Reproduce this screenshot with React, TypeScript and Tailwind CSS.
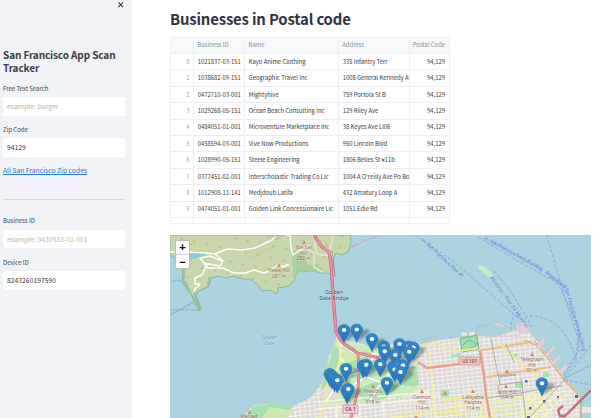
import React from 'react';

const rows = [
  ['1021837-03-151', 'Kayo Anime Clothing', '335 Infantry Terr'],
  ['1038682-09-151', 'Geographic Travel Inc', '1008 General Kennedy Av'],
  ['0472710-03-001', 'Mightyhive', '759 Portola St B'],
  ['1029268-05-151', 'Ocean Beach Consulting Inc', '129 Riley Ave'],
  ['0484051-01-001', 'Microventure Marketplace Inc', '38 Keyes Ave Ll06'],
  ['0458594-03-001', 'Vive Now Productions', '950 Lincoln Blvd'],
  ['1028990-05-151', 'Steele Engineering', '1806 Belles St #11b'],
  ['0377451-02-001', 'Interscholastic Trading Co Llc', "1004 A O'reilly Ave Po Box"],
  ['1012908-11-141', 'Medjdoub Latifa', '432 Amatury Loop A'],
  ['0474051-01-001', 'Golden Link Concessionaire Llc', '1051 Edie Rd'],
];

const pins: [number, number][] = [
  [344, 330], [356.7, 329.5], [372, 339], [399.5, 344], [408.5, 346.5], [413.3, 347.5],
  [384, 346.5], [384.7, 351.3], [409.3, 351.7], [395.3, 355], [363.3, 365.5], [366.3, 364.7],
  [380.3, 364.2], [393.7, 366], [398, 365], [403, 365.3], [346, 368.7], [394.7, 369.5],
  [400.5, 372], [330, 374], [332, 376], [334.5, 379], [337.3, 380.2], [387, 382.7],
  [347, 391], [348.3, 389], [542, 383.3],
];

const NORTH = 'M170 235H350L351 243 348 252 342 255 336 253 333 259 335 275 326 273 320 273 315 271 307 271 297 272 294 281 289 286 278 288 277 294 270 290 262 291 258 285 250 279 242 279 234 276 225 278 219 276 211 278 209 286 202 290 198 291 196 296 198 303 200 311 196 306 191 294 185 287 182 281 183 271 179 260 170 255Z';
const SOUTH = 'M242 418L248 411 254 405 265 404 277 403 285 406 293 406 300 403 308 399 315 393 322 382 326 370 329 356 334 346 337 335 343 341 358 342 372 348 383 347 394 343 410 342 419 344 440 340 460 338 462 332 476 332 477 336 493 337 508 333 518 330 517 325 525 323 528 330 535 339 545 350 553 361 563 376 574 388 581 396 582 418Z';

function Label({ x, y, children, fill = '#926355', size = 4.9, rotate = 0 }: { x: number; y: number; children: string; fill?: string; size?: number; rotate?: number }) {
  return (
    <text x={x} y={y} fontSize={size} fill={fill} textAnchor="middle" stroke="#ffffff" strokeOpacity=".35" strokeWidth=".8" paintOrder="stroke" transform={`rotate(${rotate} ${x} ${y})`}>
      {children}
    </text>
  );
}

function Pin({ x, y }: { x: number; y: number }) {
  return (
    <g transform={`translate(${x - 6.25} ${y - 5.8}) scale(.5 .46)`}>
      <path d="M12.5 .5C5.7.5.5 5.8.5 12.5c0 3 .8 5 2 7.2C5.5 26 10 33 12.5 40.5 15 33 19.5 26 22.5 19.7c1.2-2.2 2-4.2 2-7.2C24.5 5.8 19.3.5 12.5.5Z" fill="url(#pin)" stroke="#286da8" />
      <circle cx="12.5" cy="12.7" r="4.5" fill="#fff" />
    </g>
  );
}

function CityMap() {
  return (
    <svg className="block h-[183px] w-[421px] font-['Noto_Sans']" viewBox="170 235 421 183">
      <defs>
        <linearGradient id="pin" x1="0" x2="0" y1="0" y2="1"><stop stopColor="#3289ce" /><stop offset="1" stopColor="#2771b5" /></linearGradient>
        <filter id="soft"><feGaussianBlur stdDeviation="1.3" /></filter>
        <clipPath id="southClip"><path d={SOUTH} /></clipPath>
        <clipPath id="northClip"><path d={NORTH} /></clipPath>
        <pattern id="streets" width="5" height="4" patternUnits="userSpaceOnUse" patternTransform="rotate(-6)">
          <path d="M0 0H5M0 0V4" stroke="#faf9f7" strokeWidth="1.3" />
        </pattern>
        <pattern id="yellowStreets" width="7" height="5" patternUnits="userSpaceOnUse" patternTransform="rotate(-6)">
          <path d="M0 0H7M0 0V5" stroke="#f3f3a6" strokeWidth="2" />
        </pattern>
        <pattern id="diagonalStreets" width="6" height="6" patternUnits="userSpaceOnUse" patternTransform="rotate(-42)">
          <path d="M0 0H6M0 0V6" stroke="#f6f3bd" strokeWidth="2" />
        </pattern>
        <pattern id="trees" width="13" height="12" patternUnits="userSpaceOnUse" patternTransform="rotate(12)">
          <path d="M5 5l1.5-3L8 5Z" fill="#adc191" />
        </pattern>
      </defs>
      <path d="M170 235h421v183H170z" fill="#aad3df" />

      <path d={NORTH} fill="#c8d7ab" stroke="#85b99d" strokeWidth="1" />
      <g clipPath="url(#northClip)" fill="none">
        <path d="M170 235H350V311H170z" fill="url(#trees)" />
        <path d="M292 250l12 4 4 12 10-3 4 9-29 1Z" fill="#a9d09b" />
        <path d="M181 257l10-4 14-1-1 4-13 4-9 1Z" fill="#8fcad8" />
        <path d="M313 235l4 19 12 2 4-21M307 250l7 3v14l8 5" stroke="#e0e7ce" strokeWidth="1.5" />
        <path d="M200 235l6 5 14-2 8 6 14-8 10 12-6 7 12 4 4-7M249 235l2 11 8 7 20-8M182 242l8 3 9-5 9 5" stroke="#cfbd8b" strokeWidth=".7" strokeDasharray="1.5 1" />
        <path d="M170 252h13l23 1 9 1 12-5 15 1 13-2 17-8 6-8 12 4 1 12 2 7 9-6 8-3M215 254l8 7-3 5-16-3-4-5 10-2 12 5M204 263l4 5 15 0 11 5 11 0 9-3 10 3 5-2 9-6 5 2 6-3M206 266l-4 9-7 3 0 6 5 0-5 5-1 3" stroke="#fffefa" strokeWidth="1.4" strokeLinejoin="round" />
        <path d="M266 238l14-3M275 240l9-5" stroke="#aaa9ae" strokeWidth=".7" />
        <path d="M210 277l-2 10-9 5-5 5 6 14M178 260l6 10-1 12 10 16" stroke="#8aaf94" strokeWidth="3" strokeOpacity=".55" />
      </g>
      <path d="M170 310h29" stroke="#a7a1c9" strokeWidth="1" strokeDasharray="4 1" />
      <path d="M170 315l11-6 13-7" fill="none" stroke="#70b5a8" strokeWidth="1" />
      <path d="M202 310l-8-18M172 282c5-5 8 1 14 0l4 10" stroke="#80bcb8" strokeWidth="1.2" fill="none" />

      <path d={SOUTH} fill="#dddad7" stroke="#cfcdbb" />
      <g clipPath="url(#southClip)" fill="none">
        <path d="M242 320H590V418H242z" fill="url(#streets)" />
        <path d="M244 418l10-12 25-3 14 4-7 7-18 4Z" fill="#a2e2b2" />
        <path d="M262 418l8-11 18 3 8-1-10 9Z" fill="#d2e7b2" />
        <path d="M337 336L348 341 372 348 384 347 407 346 415 354 418 363 417 373 419 387 408 393 385 399 370 402 321 404 325 383Z" fill="#cdebb8" />
        <path d="M334 346l8 5-9 29-12 22 0-16 7-21ZM348 363l16-7 17 7 2 10-20 8-16-6ZM355 390l22-9 21 5-12 12-20 5ZM400 372l17-2 2 15-16 4Z" fill="#abdfb0" />
        <path d="M379 357l17-3 18 9-17 8-17-5ZM321 390l11-8 11 7-7 9-14 2Z" fill="#dedfd8" />
        <path d="M398 386h14l3 7-19 6Z" fill="#c6edbb" />
        <path d="M326 402l14-23 20-7 17-18 17-9M333 380l17 7 16-10 16 6 9-12 25-6M350 351l13 5 19-3M370 401l9-15 19-8M341 342l-1 16 14 14" stroke="#fffdf8" strokeWidth="1.7" />
        <path d="M337 341l5 9-4 17-11 18-2 18-7 15" stroke="#f1e9a2" strokeWidth="2" />
        <path d="M318 402l111-10M318 409l111-10M337 418v-14M360 418l-2-14M384 418l-1-17" stroke="#faf7da" strokeWidth="1.6" />
        <path d="M429 347l6 71M389 414l74-9M389 418l70-8M425 395l15 1" stroke="#f4f0a8" strokeWidth="1.6" />
        <path d="M460 339l17-4 2 14-17 3Z" fill="#a3dcae" stroke="#6cb68b" />
        <path d="M463 345l6-5 9 4-13 7M460 331l8 0v6h-8Z" stroke="#72b791" />
        <path d="M451 355l10-2v3l-10 2ZM515 383l8-1v6h-8ZM543 372h6v5h-6ZM512 354h5v3h-5ZM441 390h8v7h-8Z" fill="#a7e1b0" />
        <path d="M487 397l42-4 21-8v33H455l2-18Z" fill="url(#yellowStreets)" />
        <path d="M530 391l16-12 25 16-22 23h-31Z" fill="url(#diagonalStreets)" />
        <path d="M486 377l65-10M482 350l49-8" stroke="#f1bb81" strokeWidth="1.9" />
        <path d="M418 349l14-6 28 8 18-3M500 344l24 22 12 8 6 26M442 400l49-4M440 414l20-3" stroke="#efec91" strokeWidth="1.8" />
        <path d="M418 362l9 6 24-3 29-4M480 350l4 26 2 19 4 23" stroke="#e8a08d" strokeWidth="2.6" />
        <path d="M524 340l12 5 12 13 17 23 16 16v21" stroke="#e6b579" strokeWidth="1.8" />
        <path d="M491 339l9 46M506 344l8 18M498 385l2 12 22-2M500 391h21M499 385l22-3M488 398l74-12M521 378l5 40M567 377l-38 41" stroke="#93979b" strokeWidth=".7" />
        <path d="M534 341l16 16 17 23 12 13" stroke="#b4865d" strokeWidth=".8" />
      </g>
      <path d="M519 325l9-1 1 8-10 1ZM536 347l7-10 3 2-6 12ZM545 355l9-10 2 3-9 10ZM550 363l9-8 2 3-9 8ZM558 371l8-7 2 3-7 7ZM494 324l4-2 15 10 4-1M500 337l20-1" fill="#e1cfd5" stroke="#d2bdca" strokeWidth=".6" />
      <path d="M475 335c1-8 7-10 12-8M485 326l9-4M479 336c-5-2-5-10 3-12M417 341l20-5M420 343l12-3" fill="none" stroke="#b8bec1" strokeWidth="1" />
      <path d="M563 379l28-14M581 396v22" stroke="#98a5ac" strokeWidth=".8" />
      <path d="M591 390L565 416h-5l-2-6 5-4" fill="none" stroke="#c66980" strokeWidth="2.3" />
      <path d="M582 407h9v6h-9Z" fill="#f0e4df" />

      <path d="M314 235l8 12 7 5 2 12 2 30 3 38 6 10 15 11 23 5" fill="none" stroke="#bd657d" strokeWidth="3.2" strokeLinejoin="round" />
      <path d="M314 235l8 12 7 5 2 12 2 30 3 38 6 10 15 11 23 5" fill="none" stroke="#ed8ba0" strokeWidth="2.1" strokeLinejoin="round" />
      <path d="M358 354l1 17-1 20-7 27" fill="none" stroke="#d96d83" strokeWidth="2.6" />
      <path d="M358 354l1 17-1 20-7 27" fill="none" stroke="#e892a0" strokeWidth="1.8" />
      <path d="M332 251l3 26" stroke="#75899a" strokeWidth=".6" />

      <g fill="none" stroke="#8297e2" strokeWidth=".8" strokeDasharray="3 2">
        <path d="M415 235l38 26 56 49 9 8M478 237l45 27 30 16 9 10 16 48-2 22-13 17M494 271l15 18 15 24 8 14M547 235l9 32 9 31 14 30 0 22-16 26M511 330l1-11 8-5M530 316c26 0 42 21 46 46M591 345l-14 19-15 16M565 380l26 5" />
      </g>
      <path d="M478 265l6 1 8 7v4l-5-1-8-7Z" fill="#c5eccb" />
      <g fill="#6378df" fontSize="5">
        <text transform="translate(421 240) rotate(43)" textLength="56">o - San Francisco Pier 41</text>
        <text transform="translate(484 239) rotate(29)" textLength="66">is - San Francisco Ferry Building</text>
        <text transform="translate(545 273) rotate(39)" textLength="25">Angel Island</text>
        <text transform="translate(564 286) rotate(74)" textLength="68">- San Francisco Ferry Building</text>
        <text transform="translate(490 278) rotate(54)" textLength="62">Alcatraz - Pier 33 Alcatraz</text>
      </g>
      <path d="M350 247l30-13" stroke="#a69ec5" strokeWidth=".8" strokeDasharray="4 1" />
      <Label x={365} y={243} fill="#9296bd" size={4.8} rotate={-23}>Marin County</Label>
      <Label x={269.5} y={339} fill="#6c8fc5" size={4.5}>Golden</Label>
      <Label x={269.5} y={344.5} fill="#6c8fc5" size={4.5}>Gate</Label>
      <Label x={334} y={294} fill="#424d57" size={5.3}>Golden</Label>
      <Label x={334} y={300.3} fill="#424d57" size={5.3}>Gate Bridge</Label>
      <Label x={304} y={249}>Slacker</Label><Label x={304} y={254.5}>Hill</Label><Label x={304} y={260}>282 m</Label>
      <Label x={279} y={272}>Hawk Hill</Label><Label x={279} y={277.5}>281 m</Label>
      <Label x={373} y={392.5}>Presidio</Label><Label x={373} y={398}>Hill</Label><Label x={373} y={403.5}>118 m</Label>
      <Label x={422} y={398.5}>Cannon</Label><Label x={422} y={404}>Hill</Label><Label x={422} y={409.5}>114 m</Label>
      <Label x={532} y={361}>Telegraph</Label><Label x={532} y={366.5}>Hill</Label><Label x={532} y={372}>90 m</Label>
      <Label x={473} y={398.5}>Lafayette</Label><Label x={473} y={404}>Heights</Label><Label x={473} y={409.5}>114 m</Label>
      <Label x={507} y={393.5}>Nob Hill</Label><Label x={507} y={399}>104 m</Label><Label x={249} y={418}>Merced</Label>
      <Label x={508} y={376.5} fill="#54545b" size={3.6} rotate={-6}>Broadway</Label>
      <Label x={317} y={242} fill="#bb5776" size={4.5} rotate={25}>442</Label>
      <Label x={327} y={252} fill="#bb5776" size={4.5} rotate={15}>441</Label>
      <Label x={351} y={350} fill="#b74e6a" size={4.5} rotate={20}>438</Label>
      <Label x={366} y={355} fill="#b74e6a" size={4.5} rotate={12}>437</Label>
      <g fill="#d68a4d">
        {[[279, 265], [304, 242], [249.5, 412], [373, 386], [422, 391], [532, 354], [473, 391], [507, 371], [506, 386], [445, 393], [416, 417]].map(([x, y]) => <path key={`${x}-${y}`} d={`M${x - 2} ${y + 2}L${x} ${y - 2}L${x + 2} ${y + 2}Z`} />)}
      </g>
      <g fill="#5862a4"><path d="M525 380h2.5v2.5H525zM543 400h2.5v2.5H543zM529 407h2.5v2.5H529zM557 396h2v2h-2zM575 395h3v3h-3zM527 416h3v2h-3z" /></g>
      <g stroke="#c18899" strokeWidth=".7"><rect x="343" y="405" width="15" height="8.5" rx="1.3" fill="#f0cbd5" /><rect x="459" y="357" width="21" height="8" rx="1.3" fill="#f1c4b9" /></g>
      <text x="350.5" y="411.3" textAnchor="middle" fontSize="4.9" fontWeight="600" fill="#714457">CA 1</text>
      <text x="469.5" y="363" textAnchor="middle" fontSize="4.6" fontWeight="600" fill="#805052">US 101</text>

      <g filter="url(#soft)" fill="#24333e" opacity=".38">
        {pins.map(([x, y], i) => <path key={i} d={`M${x} ${y + 12}L${x + 4} ${y + 2}Q${x + 12} ${y - 3} ${x + 13} ${y + 2}Q${x + 9} ${y + 8} ${x} ${y + 12}Z`} />)}
      </g>
      {pins.map(([x, y], i) => <Pin key={i} x={x} y={y} />)}
    </svg>
  );
}

function Field({ label, value, placeholder }: { label: string; value?: string; placeholder?: string }) {
  return (
    <label className="block">
      <span className="block h-[14.5px] text-[6px] leading-[11px] whitespace-nowrap text-[#424550]">{label}</span>
      <input readOnly value={value ?? ''} placeholder={placeholder} className="block h-[18.7px] w-[122px] rounded-[2px] bg-white px-1 pb-px text-[6.8px] text-[#373a46] placeholder:text-[#b5b6ba] outline-none" />
    </label>
  );
}

export default function App() {
  return (
    <div className="flex h-[418px] w-[600px] overflow-hidden bg-white font-['Noto_Sans_CJK_SC',sans-serif] text-[#31333f]">
      <aside className="h-full w-[132px] shrink-0 bg-[#f0f2f6] pl-[3px]">
        <div className="flex h-[47.5px] justify-end pr-[8.5px] pt-[2px]">
          <svg className="h-[5.5px] w-[5.5px]" viewBox="0 0 5 5"><path d="M.4.4 4.6 4.6M4.6.4.4 4.6" stroke="#31333f" /></svg>
        </div>
        <h2 className="h-[35px] text-[10px] font-bold leading-[13.6px] tracking-[-0.11px] whitespace-nowrap text-[#3a3c48]">San Francisco App Scan<br />Tracker</h2>
        <Field label="Free Text Search" placeholder="example: burger" />
        <div className="mt-[8.3px]"><Field label="Zip Code" value="94129" /></div>
        <a className="mt-[8px] block h-[10px] text-[6.8px] leading-[10px] tracking-[-0.03px] whitespace-nowrap text-[#2878cc] underline" href="#zip-codes">All San Francisco Zip codes</a>
        <hr className="mt-[23.5px] w-[122px] border-[#d5d7dd]" />
        <div className="mt-[15.5px]"><Field label="Business ID" placeholder="example: 0430533-01-001" /></div>
        <div className="mt-[8.2px]"><Field label="Device ID" value="8243260197590" /></div>
      </aside>
      <main className="w-[468px] pl-[38px]">
        <h1 className="h-[37px] pt-[9px] text-[14.9px] font-bold leading-[20px] tracking-[-0.17px] whitespace-nowrap">Businesses in Postal code</h1>
        <div className="h-[187px] w-[279.5px] overflow-hidden rounded-[2px] border border-[#edeef1]">
          <table className="-mt-[0.8px] w-[278px] table-fixed border-collapse text-[5.87px] leading-[8px] text-[#373a44]">
            <colgroup><col className="w-[22.5px]" /><col className="w-[51px]" /><col className="w-[94px]" /><col className="w-[70.5px]" /><col className="w-[40px]" /></colgroup>
            <thead>
              <tr className="h-[16.4px] bg-[#f7f8fa] text-left text-[#8b8d96]">
                {['', 'Business ID', 'Name', 'Address', 'Postal Code'].map((h) => <th key={h} className="border-r border-b border-[#edeef1] p-0 pl-[3.3px] font-normal whitespace-nowrap">{h}</th>)}
              </tr>
            </thead>
            <tbody>
              {rows.map((row, i) => (
                <tr key={row[0] + i} className="h-[16.4px]">
                  <td className="border-r border-b border-[#edeef1] p-0 pr-[3.5px] text-right text-[#a4a6ad]">{i}</td>
                  {row.map((cell) => <td key={cell} className="overflow-hidden border-r border-b border-[#edeef1] p-0 pl-[3.7px] whitespace-nowrap">{cell}</td>)}
                  <td className="border-b border-[#edeef1] p-0 pr-[4px] text-right">94,129</td>
                </tr>
              ))}
              <tr className="h-[16.4px]"><td className="border-r border-[#edeef1]" /><td className="border-r border-[#edeef1]" /><td className="border-r border-[#edeef1]" /><td className="border-r border-[#edeef1]" /><td /></tr>
            </tbody>
          </table>
        </div>
        <section className="relative mt-[11px] h-[183px] w-[421px] overflow-hidden">
          <CityMap />
          <div className="absolute top-[5px] left-[5px] w-[15px] overflow-hidden rounded-[2px] border border-[#b9beb9] bg-white font-['Liberation_Sans',sans-serif] text-[11px] font-bold text-black">
            <button className="block h-[14px] w-full border-b border-[#cccccc] text-center leading-[13px]">+</button>
            <button className="block h-[13px] w-full text-center leading-[12px]">−</button>
          </div>
        </section>
      </main>
    </div>
  );
}
